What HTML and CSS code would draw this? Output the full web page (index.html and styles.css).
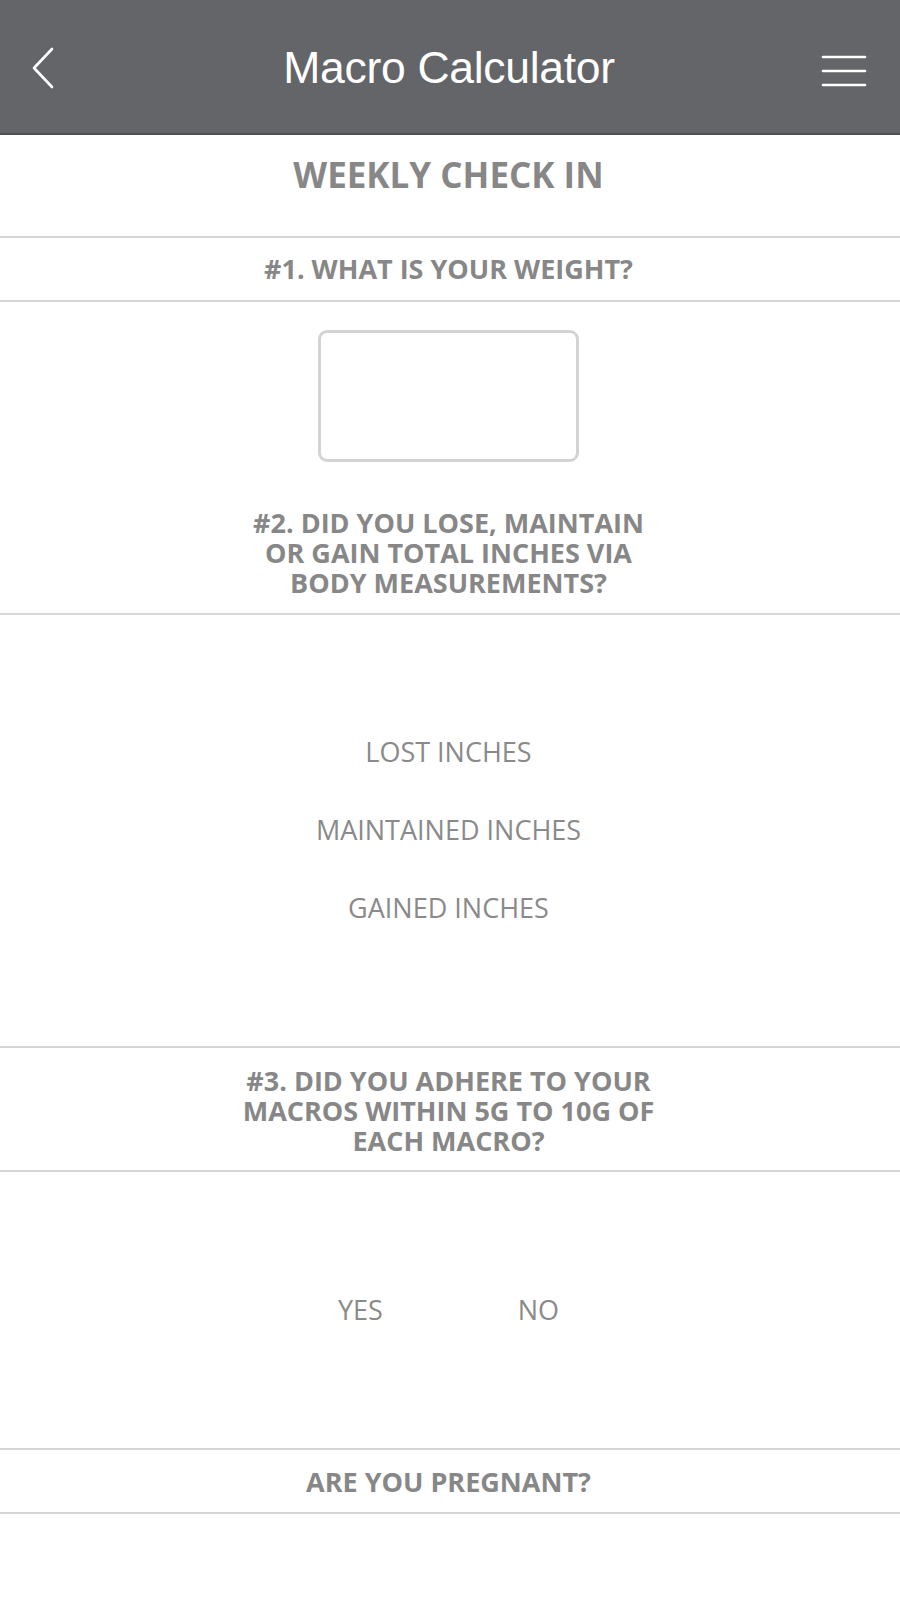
FILE: index.html
```html
<!DOCTYPE html>
<html lang="en">
<head>
<meta charset="utf-8">
<title>Macro Calculator</title>
<link rel="stylesheet" href="styles.css">
</head>
<body>
<header class="topbar">
  <button class="icon-btn back" aria-label="Back">
    <svg width="24" height="42" viewBox="0 0 24 42"><path d="M21 2 L3 21 L21 40" fill="none" stroke="#fff" stroke-width="2.6" stroke-linecap="round" stroke-linejoin="round"/></svg>
  </button>
  <h1 class="app-title">Macro Calculator</h1>
  <button class="icon-btn menu" aria-label="Menu">
    <svg width="46" height="34" viewBox="0 0 46 34"><g stroke="#fff" stroke-width="2.6" stroke-linecap="round"><line x1="2" y1="3" x2="44" y2="3"/><line x1="2" y1="17" x2="44" y2="17"/><line x1="2" y1="31" x2="44" y2="31"/></g></svg>
  </button>
</header>
<main class="form">
  <h2 class="page-title">WEEKLY CHECK IN</h2>
  <div class="q-row q1">#1. WHAT IS YOUR WEIGHT?</div>
  <section class="weight-block">
    <input class="weight-input" type="text" aria-label="Weight">
    <div class="q-text">#2. DID YOU LOSE, MAINTAIN<br>OR GAIN TOTAL INCHES VIA<br>BODY MEASUREMENTS?</div>
  </section>
  <section class="options">
    <div class="option">LOST INCHES</div>
    <div class="option">MAINTAINED INCHES</div>
    <div class="option">GAINED INCHES</div>
  </section>
  <div class="q-row q3">#3. DID YOU ADHERE TO YOUR<br>MACROS WITHIN 5G TO 10G OF<br>EACH MACRO?</div>
  <section class="yesno">
    <div class="option">YES</div>
    <div class="option">NO</div>
  </section>
  <div class="q-row q4">ARE YOU PREGNANT?</div>
</main>
</body>
</html>
```
FILE: styles.css
```css
* { box-sizing: border-box; }
html, body { margin: 0; padding: 0; background: #fff; }
body { font-family: "Open Sans", "Liberation Sans", sans-serif; color: #898989; }

.topbar {
  height: 135px;
  background: #646569;
  border-bottom: 2px solid #4f5053;
  display: grid;
  grid-template-columns: 1fr auto 1fr;
  align-items: center;
  padding: 0 33px 0 31px;
}
.icon-btn { background: none; border: 0; padding: 0; display: flex; cursor: pointer; }
.back { justify-self: start; margin-top: 3px; }
.menu { justify-self: end; margin-top: 9px; }
.app-title {
  margin: 3px 0 0;
  font-family: "Liberation Sans", Arial, sans-serif;
  font-weight: 400;
  font-size: 44.5px;
  color: #fff;
  letter-spacing: -0.3px;
}

.form { display: flex; flex-direction: column; }
.page-title {
  margin: 0;
  padding: 19px 3px 40px 0;
  text-align: center;
  font-size: 35px;
  line-height: 42px;
  font-weight: 700;
  color: #878787;
  border-bottom: 2px solid #d6d6d6;
}
.q-row, .q-text {
  text-align: center;
  font-size: 27px;
  font-weight: 700;
  line-height: 30px;
  color: #878787;
}
.q-row { border-bottom: 2px solid #d6d6d6; }
.q1 { padding: 16px 3px 16px 0; }
.q3 { padding: 18px 3px 14px 0; }
.q4 { padding: 17px 3px 15px 0; }

.weight-block {
  display: flex;
  flex-direction: column;
  align-items: center;
  padding: 28px 3px 15px 0;
  border-bottom: 2px solid #d6d6d6;
}
.weight-input {
  width: 261px;
  height: 132px;
  border: 3px solid #d3d3d3;
  border-radius: 9px;
  background: #fff;
  margin-bottom: 46px;
  outline: none;
}

.options {
  display: flex;
  flex-direction: column;
  align-items: center;
  padding: 98px 3px 99px 0;
  border-bottom: 2px solid #d6d6d6;
}
.option {
  font-size: 27px;
  line-height: 78px;
  font-weight: 400;
  color: #8a8a8a;
}
.yesno {
  height: 278px;
  display: flex;
  justify-content: center;
  align-items: center;
  gap: 135px;
  padding-right: 3px;
  border-bottom: 2px solid #d6d6d6;
}
.yesno .option { line-height: 40px; margin-top: 0; }
```
